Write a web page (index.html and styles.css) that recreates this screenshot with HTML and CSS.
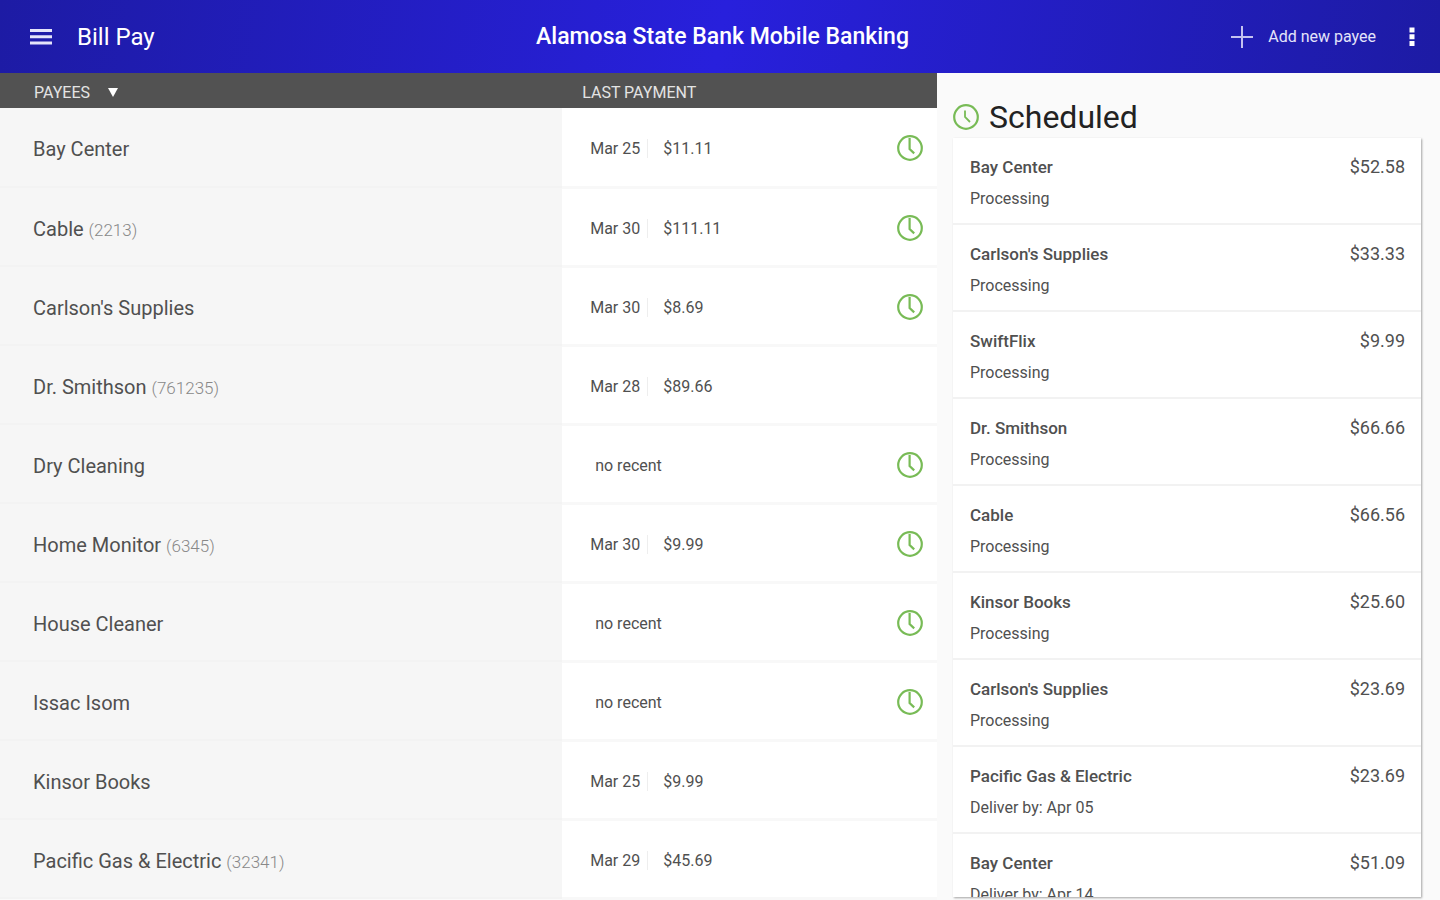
FILE: index.html
```html
<!DOCTYPE html>
<html lang="en">
<head>
    <meta charset="UTF-8">
    <meta name="viewport" content="width=device-width, initial-scale=1.0">
    <title>Bill Pay</title>
    <link rel="stylesheet" href="styles.css">
</head>
<body>

    <!-- Clock icon used in the table rows -->
    <svg class="sprite" aria-hidden="true">
        <symbol id="clock" viewBox="0 0 26 26">
            <circle cx="13" cy="13" r="11.8"/>
            <path d="M12.6 3v11l4.6 4.4"/>
        </symbol>
    </svg>

    <header class="app-bar">
        <div class="bar-left">
            <button class="icon-button" aria-label="Menu">
                <svg width="22" height="18" viewBox="0 0 22 18"><path d="M0 2.5h22M0 8.8h22M0 15h22" stroke="#e4e4fa" stroke-width="3"/></svg>
            </button>
            <span class="page-name">Bill Pay</span>
        </div>
        <h1>Alamosa State Bank Mobile Banking</h1>
        <div class="bar-right">
            <button class="add-button">
                <svg width="22" height="22" viewBox="0 0 22 22"><path d="M0 11h22M11 0v22" stroke="#c4c2f0" stroke-width="2"/></svg>
                Add new payee
            </button>
            <button class="icon-button" aria-label="More options">
                <svg width="6" height="20" viewBox="0 0 6 20"><path d="M0.5 0.5h5v5h-5zM0.5 7.3h5v5h-5zM0.5 14h5v5h-5z" fill="#fff"/></svg>
            </button>
        </div>
    </header>

    <main class="content">
        <section class="payees">
            <table class="payee-table">
                <thead>
                    <tr>
                        <th class="name"><button class="sort-button">PAYEES <svg width="10" height="9" viewBox="0 0 10 9"><path d="M0 0h10L5 9z" fill="#fff"/></svg></button></th>
                        <th class="last">LAST PAYMENT</th>
                        <th class="status" aria-label="Scheduled"></th>
                    </tr>
                </thead>
                <tbody>
                    <tr>
                        <td class="name">Bay Center</td>
                        <td class="last"><span class="date">Mar 25</span><span class="amount">$11.11</span></td>
                        <td class="status"><svg class="clock"><use href="#clock"/></svg></td>
                    </tr>
                    <tr>
                        <td class="name">Cable <small>(2213)</small></td>
                        <td class="last"><span class="date">Mar 30</span><span class="amount">$111.11</span></td>
                        <td class="status"><svg class="clock"><use href="#clock"/></svg></td>
                    </tr>
                    <tr>
                        <td class="name">Carlson's Supplies</td>
                        <td class="last"><span class="date">Mar 30</span><span class="amount">$8.69</span></td>
                        <td class="status"><svg class="clock"><use href="#clock"/></svg></td>
                    </tr>
                    <tr>
                        <td class="name">Dr. Smithson <small>(761235)</small></td>
                        <td class="last"><span class="date">Mar 28</span><span class="amount">$89.66</span></td>
                        <td class="status"></td>
                    </tr>
                    <tr>
                        <td class="name">Dry Cleaning</td>
                        <td class="last"><span class="none">no recent</span></td>
                        <td class="status"><svg class="clock"><use href="#clock"/></svg></td>
                    </tr>
                    <tr>
                        <td class="name">Home Monitor <small>(6345)</small></td>
                        <td class="last"><span class="date">Mar 30</span><span class="amount">$9.99</span></td>
                        <td class="status"><svg class="clock"><use href="#clock"/></svg></td>
                    </tr>
                    <tr>
                        <td class="name">House Cleaner</td>
                        <td class="last"><span class="none">no recent</span></td>
                        <td class="status"><svg class="clock"><use href="#clock"/></svg></td>
                    </tr>
                    <tr>
                        <td class="name">Issac Isom</td>
                        <td class="last"><span class="none">no recent</span></td>
                        <td class="status"><svg class="clock"><use href="#clock"/></svg></td>
                    </tr>
                    <tr>
                        <td class="name">Kinsor Books</td>
                        <td class="last"><span class="date">Mar 25</span><span class="amount">$9.99</span></td>
                        <td class="status"></td>
                    </tr>
                    <tr>
                        <td class="name">Pacific Gas &amp; Electric <small>(32341)</small></td>
                        <td class="last"><span class="date">Mar 29</span><span class="amount">$45.69</span></td>
                        <td class="status"></td>
                    </tr>
                </tbody>
            </table>
        </section>

        <aside class="scheduled">
            <h2>
                <svg class="clock" viewBox="0 0 26 26"><circle cx="13" cy="13" r="11.8"/><path d="M12 6.5v6.5l5 5" stroke-width="1.8"/></svg>
                Scheduled
            </h2>
            <ul class="schedule-list">
                <li>
                    <div class="details"><strong>Bay Center</strong><span>Processing</span></div>
                    <span class="price">$52.58</span>
                </li>
                <li>
                    <div class="details"><strong>Carlson's Supplies</strong><span>Processing</span></div>
                    <span class="price">$33.33</span>
                </li>
                <li>
                    <div class="details"><strong>SwiftFlix</strong><span>Processing</span></div>
                    <span class="price">$9.99</span>
                </li>
                <li>
                    <div class="details"><strong>Dr. Smithson</strong><span>Processing</span></div>
                    <span class="price">$66.66</span>
                </li>
                <li>
                    <div class="details"><strong>Cable</strong><span>Processing</span></div>
                    <span class="price">$66.56</span>
                </li>
                <li>
                    <div class="details"><strong>Kinsor Books</strong><span>Processing</span></div>
                    <span class="price">$25.60</span>
                </li>
                <li>
                    <div class="details"><strong>Carlson's Supplies</strong><span>Processing</span></div>
                    <span class="price">$23.69</span>
                </li>
                <li>
                    <div class="details"><strong>Pacific Gas &amp; Electric</strong><span>Deliver by: Apr 05</span></div>
                    <span class="price">$23.69</span>
                </li>
                <li>
                    <div class="details"><strong>Bay Center</strong><span>Deliver by: Apr 14</span></div>
                    <span class="price">$51.09</span>
                </li>
            </ul>
        </aside>
    </main>

</body>
</html>
```
FILE: styles.css
```css
* {
    box-sizing: border-box;
}

body {
    font-family: Roboto, "Liberation Sans", sans-serif;
    font-size: 16px;
    color: #505050;
    background-color: #fafafa;
    margin: 0;
    height: 100vh;
    display: flex;
    flex-direction: column;
    overflow: hidden;
}

button {
    font: inherit;
    color: inherit;
    background: none;
    border: none;
    padding: 0;
    cursor: pointer;
}

svg {
    display: block;
}

.sprite {
    position: absolute;
    width: 0;
    height: 0;
}

.clock {
    width: 26px;
    height: 26px;
    fill: none;
    stroke: #78bb56;
    stroke-width: 2.2;
}

/* Top bar */
.app-bar {
    display: grid;
    grid-template-columns: 1fr auto 1fr;
    align-items: center;
    flex: none;
    height: 73px;
    padding: 0 25px 0 30px;
    color: #fff;
    background: linear-gradient(100deg, #1d1ba4 0%, #2820dc 50%, #1d1ba4 100%);
}

.bar-left,
.bar-right {
    display: flex;
    align-items: center;
}

.bar-left {
    gap: 25px;
}

.bar-right {
    justify-content: flex-end;
    gap: 33px;
}

.page-name {
    font-size: 24px;
}

.app-bar h1 {
    font-size: 23px;
    font-weight: 500;
    margin: 0;
}

.add-button {
    display: flex;
    align-items: center;
    gap: 15px;
    color: #e4e4fa;
}

/* Main area */
.content {
    display: grid;
    grid-template-columns: 1fr 503px;
    flex: 1;
    min-height: 0;
}

.payees {
    min-width: 0;
    overflow: hidden;
}

.payee-table {
    width: 100%;
    table-layout: fixed;
    border-collapse: collapse;
}

.payee-table th {
    height: 35px;
    padding: 3px 0 0;
    text-align: left;
    font-weight: normal;
    color: #e4e4e4;
    background-color: #525252;
}

.payee-table th.name {
    width: 60%;
    padding-left: 34px;
}

.payee-table th.last {
    padding-left: 20px;
}

.payee-table .status {
    width: 40px;
}

.sort-button {
    display: flex;
    align-items: center;
    gap: 18px;
}

.payee-table td {
    height: 79px;
    padding: 4px 0 0;
    background-color: #fff;
    border-bottom: 3px solid #f8f8f8;
}

.payee-table td.name {
    padding-left: 33px;
    font-size: 20px;
    background-color: #f6f6f6;
    border-bottom: 2px solid #f3f3f3;
}

.payee-table td.last {
    padding-left: 28px;
}

.payee-table td.status {
    padding-top: 2px;
}

.payee-table small {
    font-size: 17px;
    font-weight: 300;
    color: #888;
}

.date {
    display: inline-block;
    width: 58px;
    border-right: 1px solid #eee;
    margin-right: 15px;
}

.none {
    margin-left: 5px;
}

/* Scheduled payments */
.scheduled {
    display: flex;
    flex-direction: column;
    min-height: 0;
    padding: 25px 19px 3px 16px;
}

.scheduled h2 {
    display: flex;
    align-items: center;
    gap: 10px;
    margin: 0;
    padding-bottom: 2px;
    font-size: 32px;
    line-height: 38px;
    font-weight: normal;
    color: #222;
}

.schedule-list {
    flex: 1;
    min-height: 0;
    margin: 0;
    padding: 0;
    list-style: none;
    background-color: #fff;
    box-shadow: 1px 1px 2px rgba(0, 0, 0, 0.35);
    overflow-y: auto;
    scrollbar-width: none;
}

.schedule-list li {
    display: flex;
    justify-content: space-between;
    height: 87px;
    padding: 17px 16px 0 17px;
    border-bottom: 2px solid #f2f2f2;
}

.details {
    display: flex;
    flex-direction: column;
    gap: 8px;
    line-height: 24px;
}

.details strong {
    font-size: 17px;
    font-weight: 500;
}

.price {
    font-size: 18px;
    line-height: 24px;
}
```
